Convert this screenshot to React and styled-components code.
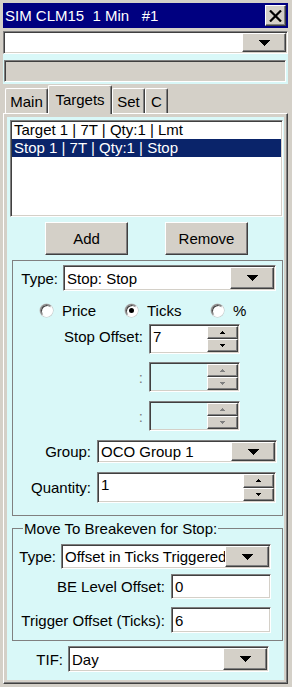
import React from 'react';
import styled, { createGlobalStyle, css } from 'styled-components';

const GRAY = '#d4d0c8';
const CYAN = '#d9f8f8';
const NAVY = '#000080';
const SELECT = '#0a246a';

const GlobalStyle = createGlobalStyle`
  html, body { margin: 0; padding: 0; background: ${GRAY}; }
  body {
    font-family: "Liberation Sans", Arial, sans-serif;
    font-size: 15px;
    color: #000;
  }
  * { box-sizing: border-box; }
`;

const sunken = css`
  border-top: 1px solid #808080;
  border-left: 1px solid #808080;
  border-right: 1px solid #fff;
  border-bottom: 1px solid #fff;
  box-shadow: inset 1px 1px 0 #404040, inset -1px -1px 0 ${GRAY};
`;

const raised = css`
  border-top: 1px solid #fff;
  border-left: 1px solid #fff;
  border-right: 1px solid #404040;
  border-bottom: 1px solid #404040;
  box-shadow: inset -1px -1px 0 #808080;
  background: ${GRAY};
`;

const Arrow = ({ up, w = 11, h = 6, color = '#000' }) => (
  <svg width={w} height={h} viewBox={`0 0 ${w} ${h}`} shapeRendering="crispEdges">
    <polygon
      points={up ? `0,${h} ${w},${h} ${w / 2},0` : `0,0 ${w},0 ${w / 2},${h}`}
      fill={color}
    />
  </svg>
);

const Window = styled.div`
  width: 292px;
  height: 687px;
  background: ${GRAY};
  padding: 3px 4px 3px 3px;
  display: flex;
  flex-direction: column;
`;

const TitleBar = styled.div`
  height: 25px;
  flex: none;
  background: ${NAVY};
  color: #fff;
  display: flex;
  align-items: center;
  justify-content: space-between;
  padding: 0 2px;
`;

const TitleText = styled.span`
  white-space: pre;
  line-height: 17px;
`;

const CloseButton = styled.div`
  ${raised}
  width: 21px;
  height: 21px;
  display: flex;
  align-items: center;
  justify-content: center;
`;

const Field = styled.div`
  ${sunken}
  flex: none;
  display: flex;
  align-items: stretch;
  width: ${(p) => p.$w}px;
  height: ${(p) => p.$h}px;
  padding: 1px;
  background: ${(p) => (p.$disabled ? 'transparent' : '#fff')};
  margin-top: ${(p) => p.$mt || 0}px;
`;

const FieldText = styled.div`
  flex: 1;
  min-width: 0;
  overflow: hidden;
  white-space: nowrap;
  line-height: 17px;
  padding-left: ${(p) => (p.$pl === undefined ? 2 : p.$pl)}px;
  padding-top: ${(p) => p.$top || 0}px;
  display: flex;
  align-items: ${(p) => (p.$top ? 'flex-start' : 'center')};
`;

const DropButton = styled.div`
  ${raised}
  width: ${(p) => p.$w || 44}px;
  flex: none;
  display: flex;
  align-items: center;
  justify-content: center;
`;

const InfoStrip = styled.div`
  height: 30px;
  flex: none;
  background: ${CYAN};
  padding: 6px 2px 2px 1px;
`;

const InfoField = styled.div`
  ${sunken}
  height: 22px;
  background: ${GRAY};
`;

const TabStrip = styled.div`
  height: 29px;
  flex: none;
  display: flex;
  align-items: flex-end;
  padding-left: 2px;
`;

const Tab = styled.div`
  width: ${(p) => p.$w}px;
  height: ${(p) => (p.$active ? 29 : 25)}px;
  margin-bottom: ${(p) => (p.$active ? -1 : 0)}px;
  position: relative;
  z-index: ${(p) => (p.$active ? 1 : 0)};
  background: ${GRAY};
  border-top: 1px solid #fff;
  border-left: 1px solid #fff;
  border-right: 1px solid #404040;
  box-shadow: inset -1px 0 0 #808080;
  border-radius: 2px 2px 0 0;
  display: flex;
  align-items: ${(p) => (p.$active ? 'flex-start' : 'center')};
  padding-top: ${(p) => (p.$active ? 5 : 0)}px;
  justify-content: center;
  line-height: 17px;
`;

const Panel = styled.div`
  flex: 1;
  display: flex;
  background: ${GRAY};
  border-top: 1px solid #fff;
  border-left: 1px solid #fff;
  border-right: 1px solid #404040;
  border-bottom: 1px solid #404040;
  box-shadow: inset -1px -1px 0 #808080;
  padding: 3px;
`;

const Content = styled.div`
  flex: 1;
  background: ${CYAN};
  display: flex;
  flex-direction: column;
`;

const ListBox = styled.div`
  ${sunken}
  width: 273px;
  height: 97px;
  margin: 3px 0 0 3px;
  background: #fff;
  padding: 0 1px;
`;

const ListItem = styled.div`
  height: 18px;
  line-height: 18px;
  padding-left: 2px;
  white-space: nowrap;
  background: ${(p) => (p.$selected ? SELECT : 'transparent')};
  color: ${(p) => (p.$selected ? '#fff' : '#000')};
`;

const ButtonRow = styled.div`
  display: flex;
  gap: 37px;
  margin-top: 5px;
  padding-left: 38px;
`;

const PushButton = styled.div`
  ${raised}
  width: 83px;
  height: 33px;
  display: flex;
  align-items: center;
  justify-content: center;
  line-height: 17px;
`;

const GroupBox = styled.div`
  width: 271px;
  margin: 5px 0 0 5px;
  border: 1px solid #808080;
  padding-bottom: 12px;
  display: flex;
  flex-direction: column;
`;

const Fieldset = styled.fieldset`
  width: 271px;
  margin: 4px 0 0 5px;
  border: 1px solid #808080;
  padding: 0 0 7px 0;
  min-width: 0;
  display: flex;
  flex-direction: column;
`;

const Legend = styled.legend`
  margin-left: 10px;
  padding: 0 1px;
  line-height: 17px;
`;

const Row = styled.div`
  display: flex;
  align-items: ${(p) => p.$align || 'center'};
  margin-top: ${(p) => p.$mt || 0}px;
  height: ${(p) => p.$h}px;
`;

const Label = styled.div`
  width: ${(p) => p.$w}px;
  flex: none;
  text-align: right;
  padding-right: ${(p) => (p.$pr === undefined ? 6 : p.$pr)}px;
  padding-top: ${(p) => p.$top || 0}px;
  line-height: 17px;
  white-space: nowrap;
  color: ${(p) => (p.$muted ? '#808080' : '#000')};
`;

const RadioRow = styled.div`
  display: flex;
  align-items: center;
  height: 14px;
  margin-top: 12px;
  padding-left: 27px;
`;

const RadioItem = styled.div`
  width: ${(p) => p.$w}px;
  display: flex;
  align-items: center;
  gap: 9px;
  line-height: 17px;
`;

const RadioCircle = styled.span`
  width: 13px;
  height: 13px;
  flex: none;
  border-radius: 50%;
  background: #fff;
  border: 1px solid;
  border-color: #808080 #fff #fff #808080;
  box-shadow: inset 1px 1px 0 #404040, 0 0 0 0.5px #c0c0c0;
  display: flex;
  align-items: center;
  justify-content: center;

  &::after {
    content: '';
    width: 5px;
    height: 5px;
    border-radius: 50%;
    background: ${(p) => (p.$checked ? '#000' : 'transparent')};
  }
`;

const SpinColumn = styled.div`
  width: 31px;
  flex: none;
  display: flex;
  flex-direction: column;
`;

const SpinButton = styled.div`
  ${raised}
  flex: 1;
  display: flex;
  align-items: center;
  justify-content: center;
`;

const Combo = ({ w, h, text, btn = 44 }) => (
  <Field $w={w} $h={h}>
    <FieldText>{text}</FieldText>
    <DropButton $w={btn}>
      <Arrow />
    </DropButton>
  </Field>
);

const Spin = ({ w, h, text, disabled }) => (
  <Field $w={w} $h={h} $disabled={disabled}>
    <FieldText $top={2}>{text}</FieldText>
    <SpinColumn>
      <SpinButton>
        <Arrow up w={5} h={3} color={disabled ? '#808080' : '#000'} />
      </SpinButton>
      <SpinButton>
        <Arrow w={5} h={3} color={disabled ? '#808080' : '#000'} />
      </SpinButton>
    </SpinColumn>
  </Field>
);

const App = () => (
  <>
    <GlobalStyle />
    <Window>
      <TitleBar>
        <TitleText>SIM CLM15  1 Min   #1</TitleText>
        <CloseButton>
          <svg width="13" height="12" viewBox="0 0 13 12">
            <path d="M1 0.5 L12 11.5 M12 0.5 L1 11.5" stroke="#000" strokeWidth="2.2" />
          </svg>
        </CloseButton>
      </TitleBar>

      <Field $w={285} $h={23} $mt={3}>
        <FieldText />
        <DropButton>
          <Arrow />
        </DropButton>
      </Field>

      <InfoStrip>
        <InfoField />
      </InfoStrip>

      <TabStrip>
        <Tab $w={43}>Main</Tab>
        <Tab $w={64} $active>Targets</Tab>
        <Tab $w={33}>Set</Tab>
        <Tab $w={23}>C</Tab>
      </TabStrip>

      <Panel>
        <Content>
          <ListBox>
            <ListItem>Target 1 | 7T | Qty:1 | Lmt</ListItem>
            <ListItem $selected>Stop 1 | 7T | Qty:1 | Stop</ListItem>
          </ListBox>

          <ButtonRow>
            <PushButton>Add</PushButton>
            <PushButton>Remove</PushButton>
          </ButtonRow>

          <GroupBox>
            <Row $mt={4} $h={26}>
              <Label $w={50} $pr={5}>Type:</Label>
              <Combo w={213} h={26} text="Stop: Stop" />
            </Row>

            <RadioRow>
              <RadioItem $w={85}>
                <RadioCircle />
                Price
              </RadioItem>
              <RadioItem $w={86}>
                <RadioCircle $checked />
                Ticks
              </RadioItem>
              <RadioItem $w={40}>
                <RadioCircle />
                %
              </RadioItem>
            </RadioRow>

            <Row $mt={7} $h={30} $align="flex-start">
              <Label $w={136} $top={4}>Stop Offset:</Label>
              <Spin w={91} h={30} text="7" />
            </Row>
            <Row $mt={8} $h={30}>
              <Label $w={136} $muted>:</Label>
              <Spin w={91} h={30} disabled />
            </Row>
            <Row $mt={9} $h={30}>
              <Label $w={136} $muted>:</Label>
              <Spin w={91} h={30} disabled />
            </Row>

            <Row $mt={9} $h={23}>
              <Label $w={84}>Group:</Label>
              <Combo w={180} h={23} text="OCO Group 1" />
            </Row>
            <Row $mt={9} $h={31}>
              <Label $w={84}>Quantity:</Label>
              <Spin w={179} h={31} text="1" />
            </Row>
          </GroupBox>

          <Fieldset>
            <Legend>Move To Breakeven for Stop:</Legend>
            <Row $mt={7} $h={25}>
              <Label $w={48} $pr={5}>Type:</Label>
              <Combo w={210} h={25} text="Offset in Ticks Triggered" />
            </Row>
            <Row $mt={5} $h={25}>
              <Label $w={158}>BE Level Offset:</Label>
              <Field $w={100} $h={25}>
                <FieldText>0</FieldText>
              </Field>
            </Row>
            <Row $mt={8} $h={26}>
              <Label $w={158}>Trigger Offset (Ticks):</Label>
              <Field $w={100} $h={26}>
                <FieldText>6</FieldText>
              </Field>
            </Row>
          </Fieldset>

          <Row $mt={5} $h={26}>
            <Label $w={61} $pr={5}>TIF:</Label>
            <Combo w={201} h={26} text="Day" />
          </Row>
        </Content>
      </Panel>
    </Window>
  </>
);

export default App;
